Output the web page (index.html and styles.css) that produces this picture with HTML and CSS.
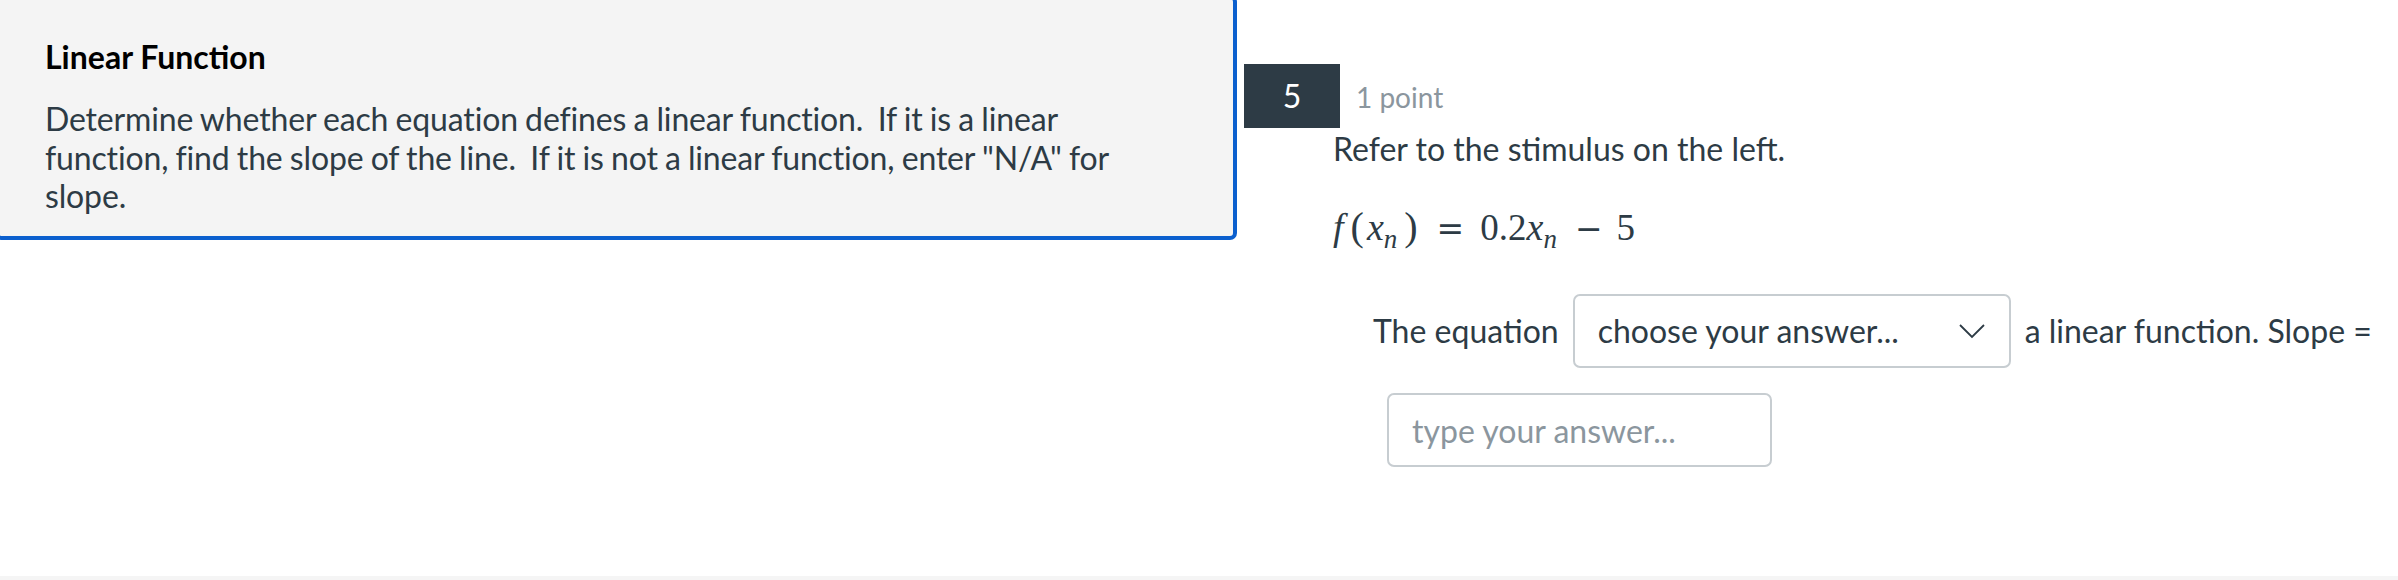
FILE: index.html
```html
<!DOCTYPE html>
<html lang="en">
<head>
    <meta charset="UTF-8" />
    <title>Quiz - Linear Function</title>
    <link rel="stylesheet" href="styles.css">
</head>
<body>

<div class="page">
    <div class="stimulus">
        <h2 class="stimulus-title">Linear Function</h2>
        <p class="stimulus-text">Determine whether each equation defines a linear function.&nbsp; If it is a linear function, find the slope of the line.&nbsp; If it is not a linear function, enter "N/A" for slope.</p>
    </div>

    <div class="question">
        <div class="question-header">
            <div class="question-number">5</div>
            <div class="question-points">1 point</div>
        </div>

        <div class="question-body">
            <p class="question-text">Refer to the stimulus on the left.</p>

            <div class="math">
                <span class="mi mi-f">f</span><span class="mo">(</span><span class="mi">x</span><sub class="sub">n</sub><span class="mo">)</span><span class="rel">=</span><span class="mn">0.2</span><span class="mi">x</span><sub class="sub">n</sub><span class="bin">−</span><span class="mn">5</span>
            </div>

            <div class="answer-row">
                <span class="answer-label">The equation</span>
                <div class="dropdown">
                    <span>choose your answer...</span>
                    <svg class="chevron" width="26" height="15" viewBox="0 0 26 15">
                        <path d="M1 1 L13 13 L25 1" fill="none" stroke="#2d3b45" stroke-width="1.8" />
                    </svg>
                </div>
                <span class="answer-label">a linear function. Slope =</span>
                <input class="answer-input" type="text" placeholder="type your answer..." />
            </div>
        </div>
    </div>
</div>

<div class="footer-line"></div>

</body>
</html>
```

FILE: styles.css
```css
body, html {
    margin: 0;
    height: 100%;
    background-color: #ffffff;
    font-family: Lato, "Noto Sans", sans-serif;
    color: #2d3b45;
    font-size: 32px;
    line-height: 1.2;
    overflow: hidden;
}

body {
    display: flex;
    flex-direction: column;
}

.page {
    flex: 1;
    display: flex;
    align-items: flex-start;
}

/* lewy panel z opisem */
.stimulus {
    box-sizing: border-box;
    width: 1242px;
    margin: -5px 0 0 -5px;
    padding: 39px 70px 20px 46px;
    background-color: #f4f4f4;
    border: 4px solid #0b5fce;
    border-radius: 7px;
    flex-shrink: 0;
}

.stimulus-title {
    margin: 0 0 24px 0;
    font-size: 32px;
    font-weight: bold;
    color: #000;
}

.stimulus-text {
    margin: 0;
    letter-spacing: -0.15px;
    word-spacing: -0.8px;
}

/* pytanie po prawej */
.question {
    margin-left: 7px;
    padding-top: 64px;
}

.question-header {
    display: flex;
    align-items: center;
    gap: 16px;
}

.question-number {
    width: 96px;
    height: 64px;
    background-color: #2d3b45;
    color: #fff;
    display: flex;
    justify-content: center;
    align-items: center;
}

.question-points {
    font-size: 28px;
    color: #8b969e;
    padding-top: 4px;
}

.question-body {
    padding-left: 89px;
}

.question-text {
    margin: 2px 0 0 0;
}

/* wzór w stylu KaTeX */
.math {
    margin-top: 38px;
    font-family: "DejaVu Serif", "Liberation Serif", serif;
    font-size: 33px;
    line-height: 42px;
    white-space: nowrap;
}

.mi {
    font-family: "Liberation Serif", serif;
    font-style: italic;
    font-size: 38px;
}

.mi-f {
    margin-right: 4px;
}

.mo {
    font-family: "Liberation Serif", serif;
    font-size: 40px;
    font-weight: 300;
    margin: 0 3px;
}

.mn {
    font-family: "Liberation Serif", serif;
    font-size: 37px;
}

.sub {
    font-family: "Liberation Serif", serif;
    font-style: italic;
    font-size: 27px;
    line-height: 0;
    vertical-align: -0.3em;
    margin: 0 4px 0 0;
}

.rel {
    margin: 0 16px;
}

.bin {
    margin: 0 14px;
}

.answer-row {
    margin-top: 44px;
    padding-left: 40px;
    display: flex;
    flex-wrap: wrap;
    align-items: center;
    column-gap: 14px;
    row-gap: 25px;
    width: 1000px;
}

.dropdown {
    box-sizing: border-box;
    width: 438px;
    height: 74px;
    border: 2px solid #c7cdd1;
    border-radius: 7px;
    padding: 0 24px 0 23px;
    display: flex;
    align-items: center;
    justify-content: space-between;
    background-color: #fff;
}

.chevron {
    display: block;
}

.answer-input {
    box-sizing: border-box;
    width: 385px;
    height: 74px;
    margin-left: 14px;
    border: 2px solid #c7cdd1;
    border-radius: 7px;
    padding: 0 23px;
    font-family: Lato, "Noto Sans", sans-serif;
    font-size: 32px;
    color: #2d3b45;
    background-color: #fff;
    outline: none;
}

.answer-input::placeholder {
    color: #8b969e;
}

.footer-line {
    height: 4px;
    background-color: #f5f5f5;
}
```
